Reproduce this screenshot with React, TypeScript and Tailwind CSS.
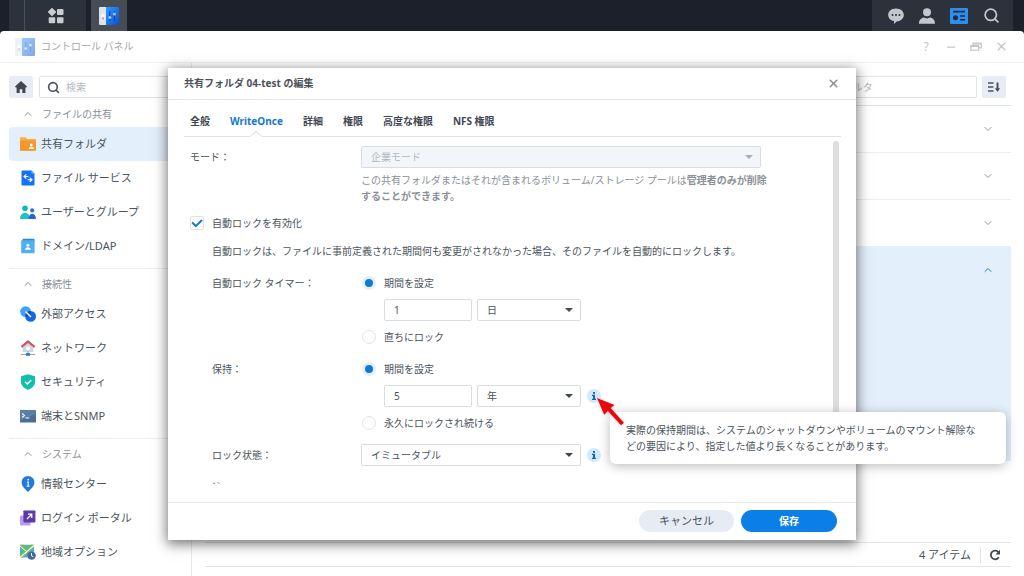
import React, { useState } from 'react';
import { ChevronDown, ChevronUp, Minus, Search, X } from 'lucide-react';
import clsx from 'clsx';

const ControlPanelIcon: React.FC<{ className?: string }> = ({ className }) => (
  <svg viewBox="0 0 20 18" className={className} aria-hidden="true">
    <defs>
      <linearGradient id="cp-blue" x1="0" y1="0" x2="1" y2="1">
        <stop offset="0" stopColor="#2f9bff" />
        <stop offset="1" stopColor="#0d4fd0" />
      </linearGradient>
    </defs>
    <rect x="0" y="0" width="7.5" height="18" rx="1" fill="#dfe4ec" />
    <rect x="7" y="0" width="13" height="18" rx="1" fill="url(#cp-blue)" />
    <path d="M10.8 4v10M15.4 4v10" stroke="#0a3fae" strokeWidth="1" />
    <rect x="2.4" y="6.6" width="3" height="7" rx="1.5" fill="#fff" />
    <rect x="2.8" y="10" width="2.2" height="3" rx="1.1" fill="#aab3c2" />
    <circle cx="10.8" cy="10.5" r="1.5" fill="#8fd0ff" />
    <circle cx="15.4" cy="7" r="1.5" fill="#8fd0ff" />
  </svg>
);

const FolderIcon = () => (
  <svg viewBox="0 0 16 16" className="size-4">
    <path d="M0 2.2A1 1 0 0 1 1 1.2h4.6l1.6 1.8H15a1 1 0 0 1 1 1v9.8a1 1 0 0 1-1 1H1a1 1 0 0 1-1-1z" fill="#f3b04c" />
    <path d="M0 4.5h16v9.3a1 1 0 0 1-1 1H1a1 1 0 0 1-1-1z" fill="#f9962a" />
    <circle cx="11.3" cy="9" r="1.4" fill="#fff" />
    <path d="M8.6 13c0-3 5.4-3 5.4 0z" fill="#fff" />
  </svg>
);

const FileServiceIcon = () => (
  <svg viewBox="0 0 16 16" className="size-4">
    <path d="M2 .6h9.5l3 3v10.8a1 1 0 0 1-1 1h-11a1 1 0 0 1-1-1V1.6a1 1 0 0 1 .5-1z" fill="#1473f5" />
    <path d="M11.5 .6l3 3h-3z" fill="#74b6ff" />
    <path d="M6.3 4.3L4 6.5l2.3 2M4.2 6.5h4.3M9.7 7.7l2.3 2-2.3 2.2M11.8 9.7H7.6" fill="none" stroke="#fff" strokeWidth="1.1" />
  </svg>
);

const UsersIcon = () => (
  <svg viewBox="0 0 16 16" className="size-4">
    <circle cx="5" cy="4.2" r="2.8" fill="#12b5bd" />
    <path d="M0 15c0-8.5 10-8.5 10 0z" fill="#1cc4c4" />
    <circle cx="12.2" cy="6.4" r="2.1" fill="#2f6fe0" />
    <path d="M8.6 15c0-7 7.4-7 7.4 0z" fill="#2b62d8" />
  </svg>
);

const DomainIcon = () => (
  <svg viewBox="0 0 16 16" className="size-4">
    <path d="M3 .8h10.5a1 1 0 0 1 1 1v2H1.5z" fill="#2f86d6" />
    <rect x="1.2" y="2.2" width="13.4" height="13" rx="1" fill="#4fb0f2" />
    <circle cx="7.9" cy="7.2" r="1.5" fill="#fff" />
    <path d="M5 11.8c0-3.4 5.8-3.4 5.8 0z" fill="#fff" />
  </svg>
);

const ExternalIcon = () => (
  <svg viewBox="0 0 16 16" className="size-4">
    <circle cx="5.6" cy="5.6" r="5.4" fill="#3fa2f6" />
    <circle cx="10.6" cy="10.4" r="5.4" fill="#1767e2" />
    <path d="M5.4 8.8a5.4 5.4 0 0 1 5.4-3.7 5.4 5.4 0 0 1-4.6 5.9z" fill="#0b4cbc" />
    <path d="M6 6l4.5 4.5" stroke="#fff" strokeWidth="1.5" strokeLinecap="round" />
  </svg>
);

const NetworkIcon = () => (
  <svg viewBox="0 0 16 16" className="size-4">
    <path d="M2.6 7v5h10.8V7L8 2.5z" fill="#cfd8e2" />
    <path d="M8 0L.6 6.3l1.5 1.5L8 3l5.9 4.8 1.5-1.5z" fill="#c4575b" />
    <circle cx="8" cy="8.6" r="2" fill="#fff" />
    <path d="M8 11v3.2M1 14.5h14" stroke="#8ea2b8" strokeWidth="1" />
    <path d="M6 13h4v2.8H6z" fill="#2a7fd6" />
  </svg>
);

const ShieldIcon = () => (
  <svg viewBox="0 0 16 16" className="size-4">
    <path d="M8 .3l7 2v5.5c0 4-3.2 6.7-7 8-3.8-1.3-7-4-7-8V2.3z" fill="#10bfae" />
    <path d="M5 7.8l2.3 2.3L11.2 6" fill="none" stroke="#fff" strokeWidth="1.4" />
  </svg>
);

const TerminalIcon = () => (
  <svg viewBox="0 0 16 16" className="size-4">
    <rect x="0" y="2" width="16" height="12.5" rx=".5" fill="#4a6f96" />
    <path d="M0 2h16v4L0 13z" fill="#5c80a5" />
    <path d="M2.2 5.5l2.2 2-2.2 2M5.5 10h3.8" fill="none" stroke="#fff" strokeWidth="1.1" />
  </svg>
);

const InfoPinIcon = () => (
  <svg viewBox="0 0 16 16" className="size-4">
    <path d="M8 0a6.4 6.4 0 0 1 6.4 6.4C14.4 10.4 10.5 13 8 16 5.5 13 1.6 10.4 1.6 6.4A6.4 6.4 0 0 1 8 0z" fill="#1f7be0" />
    <circle cx="8.2" cy="3.6" r=".9" fill="#fff" />
    <path d="M6.8 6h1.4v4M6.6 10.2h3" fill="none" stroke="#fff" strokeWidth="1.1" />
  </svg>
);

const PortalIcon = () => (
  <svg viewBox="0 0 16 16" className="size-4">
    <rect x="0" y="5.5" width="10.5" height="10" rx=".8" fill="#b79df0" />
    <rect x="3.4" y=".5" width="12" height="12" rx=".8" fill="#5c3aa8" />
    <path d="M7 9l4.5-4.5M8 4.2h3.8V8" fill="none" stroke="#fff" strokeWidth="1.2" />
  </svg>
);

const RegionIcon = () => (
  <svg viewBox="0 0 16 16" className="size-4">
    <path d="M0 .8h14v12.7H0z" fill="#4fa9e8" />
    <path d="M0 .8h4.5L7 4.5 10 .8h4v2.5L3 13.5H0V10l4-3.8L0 2.5z" fill="#6cc04a" />
    <path d="M0 13.5L14 1.5" stroke="#fff" strokeWidth="1.2" />
    <path d="M0 2l6.5 5.5" stroke="#fff" strokeWidth="1" />
    <circle cx="11.6" cy="11.6" r="4.2" fill="#41698f" />
    <path d="M11.5 9v2.8l1.8 1" fill="none" stroke="#fff" strokeWidth="1" />
  </svg>
);

interface NavItem {
  label: string;
  icon: React.FC;
}

const NAV: { title: string; items: NavItem[] }[] = [
  {
    title: 'ファイルの共有',
    items: [
      { label: '共有フォルダ', icon: FolderIcon },
      { label: 'ファイル サービス', icon: FileServiceIcon },
      { label: 'ユーザーとグループ', icon: UsersIcon },
      { label: 'ドメイン/LDAP', icon: DomainIcon },
    ],
  },
  {
    title: '接続性',
    items: [
      { label: '外部アクセス', icon: ExternalIcon },
      { label: 'ネットワーク', icon: NetworkIcon },
      { label: 'セキュリティ', icon: ShieldIcon },
      { label: '端末とSNMP', icon: TerminalIcon },
    ],
  },
  {
    title: 'システム',
    items: [
      { label: '情報センター', icon: InfoPinIcon },
      { label: 'ログイン ポータル', icon: PortalIcon },
      { label: '地域オプション', icon: RegionIcon },
    ],
  },
];

const TABS = ['全般', 'WriteOnce', '詳細', '権限', '高度な権限', 'NFS 権限'];

const Taskbar = () => (
  <header className="flex h-[31px] shrink-0 justify-between bg-[#1c202b] pr-[11px] pl-[9px]">
    <div className="flex gap-[5px]">
      <div className="flex w-[77px] bg-[#2b323c]">
        <div className="w-4 border-r border-[#4a5059]" />
        <button aria-label="メインメニュー" className="flex flex-1 items-center justify-center">
          <svg viewBox="0 0 16 16" className="size-4" fill="#c9ccd1">
            <path d="M4 .2L7.8 4 4 7.8.2 4z" stroke="#c9ccd1" strokeLinejoin="round" />
            <rect x="9" y="1" width="6.5" height="6" rx="1" />
            <rect x=".7" y="9.2" width="6.5" height="6" rx="1" />
            <rect x="9" y="9.2" width="6.5" height="6" rx="1" />
          </svg>
        </button>
      </div>
      <button aria-label="コントロール パネル" className="flex w-9 items-center justify-center bg-[#464d54]">
        <ControlPanelIcon className="h-[18px] w-5" />
      </button>
    </div>
    <div className="flex items-center gap-[15px] bg-[#2b323c] pr-[13px] pl-4">
      <button aria-label="チャット">
        <svg viewBox="0 0 16 16" className="size-4">
          <path d="M8 .6c4.5 0 7.8 2.8 7.8 6.4S12.5 13.4 8.6 13.4L6 16v-2.9C2.5 12.4.2 10 .2 7 .2 3.4 3.5.6 8 .6z" fill="#c3c7cc" />
          <circle cx="4.5" cy="7" r="1" fill="#2b323c" />
          <circle cx="8" cy="7" r="1" fill="#2b323c" />
          <circle cx="11.5" cy="7" r="1" fill="#2b323c" />
        </svg>
      </button>
      <button aria-label="ユーザー">
        <svg viewBox="0 0 16 16" className="size-4" fill="#c3c7cc">
          <circle cx="8" cy="4.3" r="4" />
          <path d="M0 15.7c0-4 2.3-5.7 5-6.2l3 1 3-1c2.7.5 5 2.2 5 6.2z" />
        </svg>
      </button>
      <button aria-label="ウィジェット">
        <svg viewBox="0 0 18 16" className="h-4 w-[18px]">
          <rect width="18" height="16" rx="1" fill="#2d8fea" />
          <path d="M3 3.6h12M10 8h5M10 11.8h5" stroke="#1d2c42" strokeWidth="1.6" />
          <circle cx="5.5" cy="9.8" r="2.5" fill="#1d2c42" />
        </svg>
      </button>
      <button aria-label="検索">
        <Search className="size-[17px] text-[#c3c7cc]" strokeWidth={2.5} />
      </button>
    </div>
  </header>
);

const TitleBar = () => (
  <div className="flex h-8 shrink-0 items-center border-b border-[#f0f1f3] pr-4 pl-[15px] text-[#a3a7ac]">
    <ControlPanelIcon className="h-[18px] w-5 opacity-50" />
    <h1 className="ml-[6px] text-[10px]">コントロール パネル</h1>
    <div className="ml-auto flex items-center gap-[13px] text-[#c3c5c8]">
      <button aria-label="ヘルプ" className="w-3 text-[12px] leading-3">?</button>
      <button aria-label="最小化"><Minus size={12} strokeWidth={2.5} /></button>
      <button aria-label="元に戻す">
        <svg viewBox="0 0 12 12" className="size-3" fill="none" stroke="currentColor" strokeWidth="1.2">
          <path d="M3 4V2.2h8.2v4.6H9" />
          <rect x=".8" y="4.6" width="7.8" height="4.6" />
          <path d="M.8 5.4h7.8M3 3h8" />
        </svg>
      </button>
      <button aria-label="閉じる"><X size={13} strokeWidth={2.5} /></button>
    </div>
  </div>
);

const Sidebar = () => (
  <aside className="w-48 shrink-0 border-r border-[#e8eaed] pt-[13px] pl-[9px]">
    <div className="flex gap-[6px] pr-2">
      <button aria-label="ホーム" className="flex h-[22px] w-6 items-center justify-center rounded-xs bg-[#e8edf5]">
        <svg viewBox="0 0 12 12" className="size-3" fill="#3f4852">
          <path d="M6 0l6 5.6-1 1.1-.6-.5V12H7.3V8.3H4.7V12H1.6V6.2l-.6.5-1-1.1z" />
        </svg>
      </button>
      <label className="flex h-[22px] flex-1 items-center rounded-xs border border-[#dfe2e6] pl-[7px]">
        <Search size={13} strokeWidth={3} className="shrink-0 text-[#4a525c]" />
        <input aria-label="検索" placeholder="検索" className="ml-[6px] w-full min-w-0 text-[10px] placeholder:text-[#b4b8bd] focus:outline-none" />
      </label>
    </div>
    <nav className="pt-[6px]">
      {NAV.map((section, i) => (
        <section key={section.title} className={clsx('pb-[5px]', i > 0 && 'border-t border-[#eceef1] pt-[5px]')}>
          <h2 className="mb-[3px] flex h-5 items-center text-[10px] text-[#8b9097]">
            <ChevronUp size={12} className="mr-2 ml-[13px]" />
            {section.title}
          </h2>
          {section.items.map(({ label, icon: Icon }) => (
            <a
              key={label}
              href="#"
              className={clsx(
                'flex h-[34px] items-center gap-[5px] rounded-l-sm pl-[11px] text-[11px] text-[#4b535c]',
                label === '共有フォルダ' && 'bg-[#e3effb]',
              )}
            >
              <Icon />
              {label}
            </a>
          ))}
        </section>
      ))}
    </nav>
  </aside>
);

const FolderList = () => (
  <main className="flex min-w-0 flex-1 flex-col pt-[13px] pr-[13px] pl-[13px]">
    <div className="flex justify-end gap-[5px] pr-[5px]">
      <input
        aria-label="フィルタ"
        placeholder="フィルタ"
        className="h-[22px] w-40 rounded-xs border border-[#dfe2e6] pl-[15px] text-[10px] placeholder:text-[#b4b8bd]"
      />
      <button aria-label="並べ替え" className="flex h-[22px] w-6 items-center justify-center rounded-xs bg-[#e8edf5]">
        <svg viewBox="0 0 14 12" className="h-3 w-[14px]" fill="none" stroke="#4a525c">
          <path d="M1 2h5.5M1 6h5.5M1 10h5.5" strokeWidth="1.6" />
          <path d="M10.5 1.5V8" strokeWidth="2" />
          <path d="M7.9 7.2h5.2L10.5 11z" fill="#4a525c" stroke="none" />
        </svg>
      </button>
    </div>
    <ul className="mt-[7px] border-t border-[#dfe2e6]">
      {[0, 1, 2].map((row) => (
        <li key={row} className="flex h-[47px] items-center justify-end border-b border-[#eceef1] pr-[17px]">
          <button aria-label="展開"><ChevronDown size={12} className="text-[#9096a0]" /></button>
        </li>
      ))}
      <li className="flex h-[214px] justify-end bg-[#e3effb] pt-[17px] pr-[17px]">
        <button aria-label="折りたたむ" className="h-3"><ChevronUp size={12} className="text-[#1a7fd8]" /></button>
      </li>
    </ul>
    <footer className="mt-auto mb-[9px] flex h-[25px] items-center justify-end border-y border-[#e4e6e9] pr-[10px] text-[11px] text-[#4b535c]">
      <span className="leading-[22px]">4 アイテム</span>
      <span className="mr-2 ml-[9px] h-4 w-px bg-[#e4e6e9]" />
      <button aria-label="更新">
        <svg viewBox="0 0 12 12" className="size-3">
          <path d="M9.8 8.3A4.3 4.3 0 1 1 9.5 3.3" fill="none" stroke="#3f4852" strokeWidth="1.8" />
          <path d="M11 .8v4.6H6.5z" fill="#3f4852" />
        </svg>
      </button>
    </footer>
  </main>
);

interface DropDownProps {
  label: string;
  value: string;
  className?: string;
  disabled?: boolean;
}

const DropDown: React.FC<DropDownProps> = ({ label, value, className, disabled }) => (
  <div className={clsx('relative', className)}>
    <select
      aria-label={label}
      disabled={disabled}
      className="h-[22px] w-full appearance-none rounded-xs border border-[#d9dde2] bg-white pt-[2px] pl-[9px] text-[10px] text-[#4b535c] disabled:bg-[#f2f6fa] disabled:text-[#b3b8be] disabled:opacity-100"
    >
      <option>{value}</option>
    </select>
    <svg
      viewBox="0 0 8 4"
      className={clsx('pointer-events-none absolute top-[9px] right-2 h-1 w-2', disabled ? 'fill-[#a9aeb5]' : 'fill-[#3f4852]')}
    >
      <path d="M0 0h8L4 4z" />
    </svg>
  </div>
);

interface RadioProps {
  name: string;
  label: string;
  checked: boolean;
  onSelect: () => void;
}

const Radio: React.FC<RadioProps> = ({ name, label, checked, onSelect }) => (
  <label className="flex h-[22px] items-center gap-2 leading-[22px]">
    <input
      type="radio"
      name={name}
      checked={checked}
      onChange={onSelect}
      className="ml-px size-[14px] appearance-none rounded-full border border-[#dfe3e8] bg-white checked:border-[3px] checked:border-[#e6f0fa] checked:bg-[#0f79d8]"
    />
    {label}
  </label>
);

const InfoBadge = () => (
  <button aria-label="情報" className="ml-[6px] flex size-[14px] items-center justify-center rounded-full bg-[#d3e8fa]">
    <svg viewBox="0 0 6 8" className="h-2 w-[6px]" fill="#1268b0">
      <rect x="2" y="0" width="2" height="1.8" />
      <path d="M1 2.8h3v4h1V8H1V6.8h1V4H1z" />
    </svg>
  </button>
);

interface PeriodProps {
  name: string;
  title: string;
  amount: string;
  unit: string;
  otherLabel: string;
  info?: boolean;
}

const PeriodRow: React.FC<PeriodProps> = ({ name, title, amount, unit, otherLabel, info }) => {
  const [fixed, setFixed] = useState(true);
  return (
    <fieldset className="flex pl-[22px]">
      <legend className="float-left h-[22px] w-[149px] leading-[22px]">{title}</legend>
      <div className="flex flex-col gap-[5px]">
        <Radio name={name} label="期間を設定" checked={fixed} onSelect={() => setFixed(true)} />
        <div className="flex items-center pl-[23px]">
          <input
            aria-label={title}
            defaultValue={amount}
            className="mr-[5px] h-[22px] w-[88px] rounded-xs border border-[#d9dde2] pl-[9px]"
          />
          <DropDown label="単位" value={unit} className="w-[104px]" />
          {info && <InfoBadge />}
        </div>
        <Radio name={name} label={otherLabel} checked={!fixed} onSelect={() => setFixed(false)} />
      </div>
    </fieldset>
  );
};

const EditDialog = () => {
  const [autoLock, setAutoLock] = useState(true);
  return (
    <div
      role="dialog"
      aria-label="共有フォルダ 04-test の編集"
      className="relative w-[688px] bg-white text-[10px] text-[#4b535c] shadow-[0_3px_12px_1px_rgba(0,0,0,0.55)]"
    >
      <div className="flex h-8 items-center justify-between border-b border-[#e4e6e9] pr-4 pl-4">
        <h2 className="font-bold">共有フォルダ 04-test の編集</h2>
        <button aria-label="閉じる"><X size={13} strokeWidth={3} className="text-[#8b9097]" /></button>
      </div>

      <div role="tablist" className="mr-[15px] ml-4 flex h-[37px] gap-5 border-b border-[#e0e2e5] pt-3 pl-[6px]">
        {TABS.map((tab) => (
          <button
            key={tab}
            role="tab"
            aria-selected={tab === 'WriteOnce'}
            className={clsx('relative h-full pb-1 font-bold', tab === 'WriteOnce' ? 'text-[#1478cc]' : 'text-[#3f4852]')}
          >
            {tab}
            {tab === 'WriteOnce' && (
              <svg viewBox="0 0 12 6" className="absolute -bottom-px left-1/2 h-[6px] w-3 -translate-x-1/2">
                <path d="M0 5.5L6 .5l6 5V6H0z" fill="#fff" />
                <path d="M0 5.5L6 .5l6 5" fill="none" stroke="#d5d8dc" />
              </svg>
            )}
          </button>
        ))}
      </div>

      <div className="relative h-[348px] pt-[9px] pl-[22px]">
        <div className="flex">
          <span className="w-[171px] leading-[22px]">モード：</span>
          <div>
            <DropDown label="モード" value="企業モード" className="w-[400px]" disabled />
            <p className="mt-1 leading-4 text-[#8b9097]">
              この共有フォルダまたはそれが含まれるボリューム/ストレージ プールは<b>管理者のみが削除</b>
              <br />
              <b>することができます。</b>
            </p>
          </div>
        </div>

        <label className="mt-2 flex h-[22px] w-fit items-center gap-2 leading-[22px]">
          <span className="relative flex">
            <input
              type="checkbox"
              checked={autoLock}
              onChange={(e) => setAutoLock(e.target.checked)}
              className="size-[14px] appearance-none rounded-xs border border-[#dfe3e8] bg-white"
            />
            {autoLock && (
              <svg viewBox="0 0 14 14" className="pointer-events-none absolute inset-0 size-[14px]">
                <path d="M2.2 6.5l3.6 3.7 6.2-6.2" fill="none" stroke="#1478cc" strokeWidth="2" />
              </svg>
            )}
          </span>
          自動ロックを有効化
        </label>
        <p className="mt-[6px] pl-[22px] leading-[22px] whitespace-nowrap">
          自動ロックは、ファイルに事前定義された期間何も変更がされなかった場合、そのファイルを自動的にロックします。
        </p>

        <div className="mt-[10px] flex flex-col gap-[10px]">
          <PeriodRow name="timer" title="自動ロック タイマー：" amount="1" unit="日" otherLabel="直ちにロック" />
          <PeriodRow name="retention" title="保持：" amount="5" unit="年" otherLabel="永久にロックされ続ける" info />
          <div className="flex items-center pl-[22px]">
            <span className="w-[149px] leading-[22px]">ロック状態：</span>
            <DropDown label="ロック状態" value="イミュータブル" className="w-[220px]" />
            <InfoBadge />
          </div>
          {/* upper edge of the next row, scrolled out of view */}
          <svg viewBox="0 0 10 14" className="ml-[22px] h-[14px] w-[10px]" stroke="#8b9097" fill="none">
            <path d="M1 7.3h2.2M5.5 6.5l2 1" />
          </svg>
        </div>
        <div className="absolute top-1 right-[17px] h-[300px] w-[6px] rounded-full bg-[#dcdddf]" />
      </div>

      <div className="mt-[17px] flex h-[38px] items-center justify-end gap-[7px] border-t border-[#e8eaed] pr-[19px] text-[11px]">
        <button className="h-[22px] w-[95px] rounded-full bg-[#e7ecf4]">キャンセル</button>
        <button className="h-[22px] w-24 rounded-full bg-[#0a7fe8] text-[10px] font-bold text-white">保存</button>
      </div>

      <div
        role="tooltip"
        className="absolute top-[344px] left-[442px] w-[396px] rounded-md bg-white px-4 py-[10px] leading-4 shadow-[0_2px_12px_rgba(0,0,0,0.28)]"
      >
        実際の保持期間は、システムのシャットダウンやボリュームのマウント解除な
        <br />
        どの要因により、指定した値より長くなることがあります。
      </div>
      <svg viewBox="0 0 30 30" className="absolute top-[329px] left-[428px] size-[30px] drop-shadow-sm" fill="#e8080c">
        <path d="M1 1l17.5 7-3.8 3.1 13.3 14.7-3 2.5-13.1-14.4-3.7 3.8z" />
      </svg>
    </div>
  );
};

export default function App() {
  return (
    <div
      lang="ja"
      className="flex h-screen flex-col overflow-hidden bg-[#1c202b] font-['Noto_Sans','Noto_Sans_CJK_JP',sans-serif]"
    >
      <Taskbar />
      <div className="relative flex min-h-0 flex-1 flex-col rounded-t-sm bg-white">
        <TitleBar />
        <div className="flex min-h-0 flex-1">
          <Sidebar />
          <FolderList />
        </div>
        <div className="absolute inset-0 flex items-center justify-center">
          <EditDialog />
        </div>
      </div>
    </div>
  );
}
